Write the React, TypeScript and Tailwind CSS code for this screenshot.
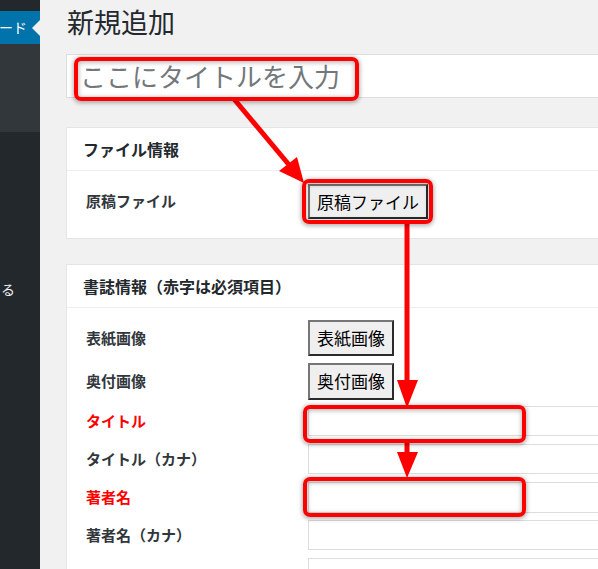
export default function App() {
  const boxShadow =
    "shadow-[0_1px_4px_1px_rgba(0,0,0,0.3),inset_0_1px_4px_1px_rgba(0,0,0,0.25)]";
  const btn =
    "px-[7px] bg-[#efefef] border-2 border-[#2b2b2b] border-t-[#767676] border-l-[#767676] text-[17px] leading-[20px] text-black";
  return (
    <div className="relative w-[598px] h-[569px] overflow-hidden bg-[#f1f1f1] flex items-start font-['Noto_Sans_CJK_JP',sans-serif] text-[#23282d]">
      <aside className="w-[40px] h-[569px] shrink-0 bg-[#23282d] flex flex-col">
        <div className="h-[11px] shrink-0" />
        <div className="relative h-[33px] shrink-0 bg-[#0073aa] text-white text-[14px] leading-[33px] whitespace-nowrap overflow-hidden">
          <span className="block -ml-[1px]">ード</span>
          <span className="absolute right-0 top-[9px] w-0 h-0 border-y-[8px] border-y-transparent border-r-[8px] border-r-[#f1f1f1]" />
        </div>
        <div className="h-[88px] shrink-0 bg-[#32373c]" />
        <div className="mt-[148px] pl-[1px] text-[14px] leading-[18px] text-[#eeeeee] whitespace-nowrap overflow-hidden">
          る
        </div>
      </aside>

      <main className="flex-1 pl-[26px] -mr-[30px] pt-[6px] block">
        <h1 className="pl-[1px] text-[27px] leading-[32px] font-normal text-[#23282d]">
          新規追加
        </h1>
        <div className="mt-[16px] h-[44px] bg-white border border-[#dddddd] flex items-center pl-[13px] text-[26px] leading-[32px] text-[#72777c] whitespace-nowrap">
          ここにタイトルを入力
        </div>

        <section className="mt-[29px] bg-white border border-[#e5e5e5]">
          <div className="h-[43px] border-b border-[#eeeeee] flex items-center pl-[16px] text-[16px] font-bold">
            ファイル情報
          </div>
          <div className="h-[67px] pt-[13px]">
            <div className="h-[35px] flex items-center">
              <div className="w-[241px] pl-[19px] text-[15px] font-bold text-[#32373c]">
                原稿ファイル
              </div>
              <button className={`h-[35px] ${btn}`}>原稿ファイル</button>
            </div>
          </div>
        </section>

        <section className="mt-[25px] bg-white border border-[#e5e5e5]">
          <div className="h-[43px] border-b border-[#eeeeee] flex items-center pl-[16px] text-[16px] font-bold">
            書誌情報（赤字は必須項目）
          </div>
          <div className="pt-[12px]">
            <div className="h-[36px] flex items-center">
              <div className="w-[241px] pl-[19px] text-[15px] font-bold text-[#32373c]">表紙画像</div>
              <button className={`h-[36px] ${btn}`}>表紙画像</button>
            </div>
            <div className="mt-[7px] h-[36px] flex items-center">
              <div className="w-[241px] pl-[19px] text-[15px] font-bold text-[#32373c]">奥付画像</div>
              <button className={`h-[37px] ${btn}`}>奥付画像</button>
            </div>
            <div className="mt-[7px] h-[30px] flex items-center">
              <div className="w-[241px] pl-[19px] text-[15px] font-bold text-[#ff0000]">タイトル</div>
              <div className="flex-1 h-[30px] border border-[#dddddd] bg-white" />
            </div>
            <div className="mt-[8px] h-[30px] flex items-center">
              <div className="w-[241px] pl-[19px] text-[15px] font-bold text-[#32373c]">タイトル（カナ）</div>
              <div className="flex-1 h-[30px] border border-[#dddddd] bg-white" />
            </div>
            <div className="mt-[8px] h-[31px] flex items-center">
              <div className="w-[241px] pl-[19px] text-[15px] font-bold text-[#ff0000]">著者名</div>
              <div className="flex-1 h-[31px] border border-[#dddddd] bg-white" />
            </div>
            <div className="mt-[7px] h-[30px] flex items-center">
              <div className="w-[241px] pl-[19px] text-[15px] font-bold text-[#32373c]">著者名（カナ）</div>
              <div className="flex-1 h-[30px] border border-[#dddddd] bg-white" />
            </div>
            <div className="mt-[8px] h-[30px] flex items-center">
              <div className="w-[241px] pl-[19px]" />
              <div className="flex-1 h-[30px] border border-[#dddddd] bg-white" />
            </div>
          </div>
        </section>
      </main>

      {/* annotations */}
      <svg className="absolute left-0 top-0 pointer-events-none" width="598" height="569" viewBox="0 0 598 569">
        <g fill="#ff0000" stroke="#ff0000">
          <line x1="234" y1="99" x2="290" y2="166" strokeWidth="5" />
          <polygon points="279,171 297,157 304,183" stroke="none" />
          <line x1="407" y1="222" x2="407" y2="386" strokeWidth="5" />
          <polygon points="397,380 418,380 407,408" stroke="none" />
          <line x1="407" y1="441" x2="407" y2="456" strokeWidth="5" />
          <polygon points="397,452 418,452 407,478" stroke="none" />
        </g>
      </svg>
      <div className={`absolute left-[74px] top-[57px] w-[285px] h-[44px] border-[4px] border-[#ff0000] rounded-[7px] ${boxShadow}`} />
      <div className={`absolute left-[302px] top-[179px] w-[131px] h-[45px] border-[4px] border-[#ff0000] rounded-[7px] ${boxShadow}`} />
      <div className={`absolute left-[303px] top-[405px] w-[223px] h-[38px] border-[4px] border-[#ff0000] rounded-[7px] ${boxShadow}`} />
      <div className={`absolute left-[303px] top-[477px] w-[223px] h-[40px] border-[4px] border-[#ff0000] rounded-[7px] ${boxShadow}`} />
    </div>
  );
}
